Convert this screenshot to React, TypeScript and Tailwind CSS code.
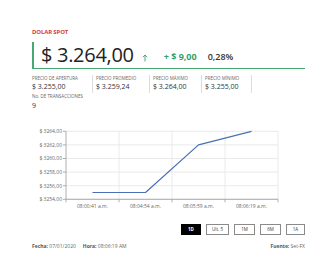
import React from "react";

const stats = [
  { label: "PRECIO DE APERTURA", value: "$ 3.255,00", w: "w-[61px]" },
  { label: "PRECIO PROMEDIO", value: "$ 3.259,24", w: "w-[57px]" },
  { label: "PRECIO MÁXIMO", value: "$ 3.264,00", w: "w-[52px]" },
  { label: "PRECIO MÍNIMO", value: "$ 3.255,00", w: "w-[50px]" },
];

const ranges = [
  { label: "1D", w: "w-[20px]", active: true },
  { label: "Ult. 5", w: "w-[23px]" },
  { label: "1M", w: "w-[21px]" },
  { label: "6M", w: "w-[21px]" },
  { label: "1A", w: "w-[19px]" },
];

function Chart() {
  const left = 34;
  const right = 246;
  const top = 5.3;
  const bottom = 73.3;
  const yFor = (v: number) => bottom - ((v - 3254) / 10) * (bottom - top);
  const ticks = [3264, 3262, 3260, 3258, 3256, 3254];
  const bounds = [34, 87, 140, 193, 246];
  const cats = ["08:00:41 a.m.", "08:04:54 a.m.", "08:05:59 a.m.", "08:06:19 a.m."];
  const data = [3255, 3255, 3262, 3264];
  const pts = data.map((v, i) => `${60.5 + i * 53},${yFor(v)}`).join(" ");

  return (
    <svg width="273" height="86" viewBox="0 0 273 86" className="block">
      {ticks.map((t) => (
        <g key={t}>
          <line x1={left} x2={right} y1={yFor(t)} y2={yFor(t)} stroke="#e4e4e4" strokeWidth="0.8" />
          <line x1={left - 3} x2={left} y1={yFor(t)} y2={yFor(t)} stroke="#9a9a9a" strokeWidth="0.8" />
          <text
            x={left - 4}
            y={yFor(t) + 1.8}
            textAnchor="end"
            fontSize="5"
            fill="#666"
            fontFamily="'Open Sans', sans-serif"
          >
            $ {t},00
          </text>
        </g>
      ))}
      {bounds.slice(1).map((b) => (
        <line key={b} x1={b} x2={b} y1={top} y2={bottom} stroke="#e4e4e4" strokeWidth="0.8" />
      ))}
      {bounds.map((b) => (
        <line key={"t" + b} x1={b} x2={b} y1={bottom} y2={bottom + 3} stroke="#9a9a9a" strokeWidth="0.8" />
      ))}
      <line x1={left} x2={left} y1={top} y2={bottom} stroke="#9a9a9a" strokeWidth="0.8" />
      <line x1={left} x2={right} y1={bottom} y2={bottom} stroke="#9a9a9a" strokeWidth="0.8" />
      {cats.map((c, i) => (
        <text
          key={c}
          x={60.5 + i * 53}
          y={81.5}
          textAnchor="middle"
          fontSize="5"
          fill="#666"
          fontFamily="'Open Sans', sans-serif"
        >
          {c}
        </text>
      ))}
      <polyline points={pts} fill="none" stroke="#4a6fb5" strokeWidth="1.2" strokeLinejoin="round" />
    </svg>
  );
}

export default function App() {
  return (
    <div
      className="w-[336px] h-[280px] bg-white overflow-hidden pt-[29px] pl-[32px] pr-[31px] text-[#333]"
      style={{ fontFamily: "'Open Sans', Lato, sans-serif" }}
    >
      <div className="text-[6px] leading-[7px] font-bold text-[#d23a45] tracking-tight">DOLAR SPOT</div>

      {/* price block */}
      <div className="mt-[6px] h-[27px] border-l-2 border-b-[1.5px] border-[#48a874] pl-[7px] flex items-center">
        <span className="text-[20px] leading-none text-[#222] tracking-[-0.3px]">$ 3.264,00</span>
        <svg width="6" height="8" viewBox="0 0 6 8" className="ml-[8px] mt-[5px]" aria-hidden>
          <path d="M3 7.5V1M0.8 3.2L3 1l2.2 2.2" stroke="#3a9e6a" strokeWidth="0.9" fill="none" />
        </svg>
        <span className="ml-[16px] mt-[4px] text-[9px] font-bold text-[#35a06a]">+ $ 9,00</span>
        <span className="ml-[11px] mt-[4px] text-[9px] font-semibold text-[#333]">0,28%</span>
      </div>

      {/* stats */}
      <div className="mt-[6px] flex">
        {stats.map((s, i) => (
          <div
            key={s.label}
            className={`${s.w} h-[18px] border-r border-[#dcdcdc] ${i === 0 ? "" : "pl-[3px]"}`}
          >
            <div className="text-[4.5px] leading-[7px] text-[#666] whitespace-nowrap">{s.label}</div>
            <div className="text-[7px] leading-[9px] text-[#333] whitespace-nowrap">{s.value}</div>
          </div>
        ))}
      </div>
      <div className="text-[4.5px] leading-[6px] text-[#666]">No. DE TRANSACCIONES</div>
      <div className="mt-[2px] text-[7px] leading-[10px] text-[#333]">9</div>

      <div className="mt-[15px]">
        <Chart />
      </div>

      {/* range buttons */}
      <div className="mt-[12px] flex justify-end gap-[5px]">
        {ranges.map((r) => (
          <div
            key={r.label}
            className={`${r.w} h-[11px] flex items-center justify-center text-[4.5px] border ${
              r.active ? "bg-black border-black text-white font-bold" : "bg-white border-[#8a8a8a] text-[#333]"
            }`}
          >
            {r.label}
          </div>
        ))}
      </div>

      {/* footer */}
      <div className="mt-[8px] flex justify-between text-[5px] text-[#666]">
        <div>
          <span className="font-bold text-[#555]">Fecha:</span> 07/01/2020
          <span className="ml-[7px] font-bold text-[#555]">Hora:</span> 08:06:19 AM
        </div>
        <div>
          <span className="font-bold text-[#555]">Fuente:</span> Set-FX
        </div>
      </div>
    </div>
  );
}
